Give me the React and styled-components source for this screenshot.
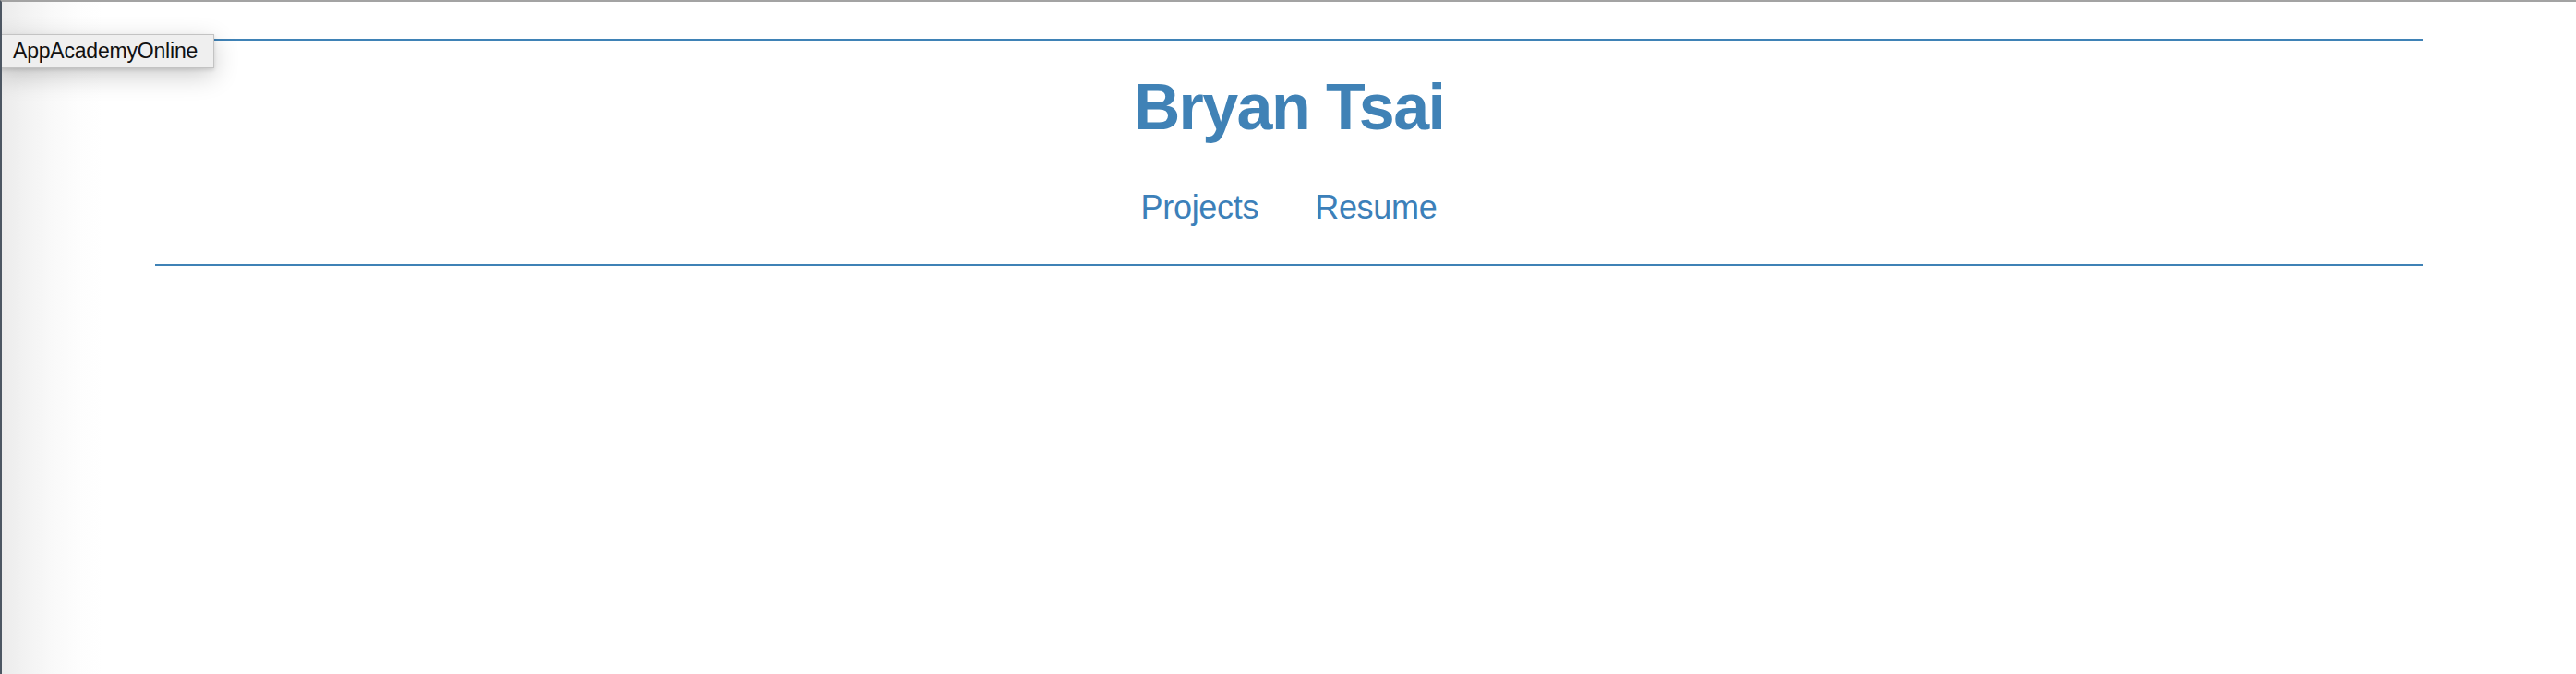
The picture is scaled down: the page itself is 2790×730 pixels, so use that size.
import React from "react";
import styled, { createGlobalStyle } from "styled-components";

const Global = createGlobalStyle`
  html, body { margin: 0; padding: 0; background: #ffffff; }
  body {
    font-family: "Liberation Sans", Arial, Helvetica, sans-serif;
    height: 730px;
    overflow: hidden;
  }
`;

const Window = styled.div`
  position: relative;
  box-sizing: border-box;
  height: 730px;
  border-top: 2px solid #a3a3a3;
  border-left: 2px solid #4c5662;
  background: #ffffff;
  overflow: hidden;
`;

const EdgeShade = styled.div`
  position: absolute;
  top: 0;
  left: 0;
  bottom: 0;
  width: 110px;
  background: linear-gradient(to right, #ebebeb 0%, #f3f3f3 25%, #f9f9f9 50%, #fdfdfd 75%, rgba(255,255,255,0) 100%);
  pointer-events: none;
`;

const Page = styled.div`
  position: relative;
  margin: 0 166px 0 166px;
  padding-top: 40px;
`;

const Header = styled.header`
  border-top: 2px solid #3f82b6;
  border-bottom: 2px solid #3f82b6;
  padding: 35px 0 41px;
  display: flex;
  flex-direction: column;
  align-items: center;
`;

const Title = styled.h1`
  margin: 0;
  font-family: "Liberation Sans", Arial, Helvetica, sans-serif;
  font-weight: 700;
  font-size: 70px;
  line-height: 75px;
  letter-spacing: -1.6px;
  color: #4082b6;
`;

const Nav = styled.nav`
  margin-top: 51px;
  display: flex;
  gap: 61px;
`;

const NavLink = styled.a`
  font-family: "Liberation Sans", Arial, Helvetica, sans-serif;
  font-size: 36px;
  line-height: 40px;
  color: #3c80b9;
  text-decoration: none;
  letter-spacing: -0.3px;
`;

const Tooltip = styled.div`
  position: absolute;
  top: 35px;
  left: -2px;
  width: 232px;
  height: 37px;
  box-sizing: border-box;
  padding-left: 14px;
  display: flex;
  align-items: center;
  background: #efefef;
  border: 1px solid #c3c3c3;
  border-left: none;
  box-shadow: 0 8px 28px rgba(0, 0, 0, 0.2), 0 2px 4px rgba(0, 0, 0, 0.12);
  font-family: "Liberation Sans", Arial, Helvetica, sans-serif;
  font-size: 23px;
  color: #111111;
  letter-spacing: -0.2px;
`;

export default function App() {
  return (
    <>
      <Global />
      <Window>
        <EdgeShade />
        <Page>
          <Header>
            <Title>Bryan Tsai</Title>
            <Nav>
              <NavLink href="#projects">Projects</NavLink>
              <NavLink href="#resume">Resume</NavLink>
            </Nav>
          </Header>
        </Page>
        <Tooltip>AppAcademyOnline</Tooltip>
      </Window>
    </>
  );
}
